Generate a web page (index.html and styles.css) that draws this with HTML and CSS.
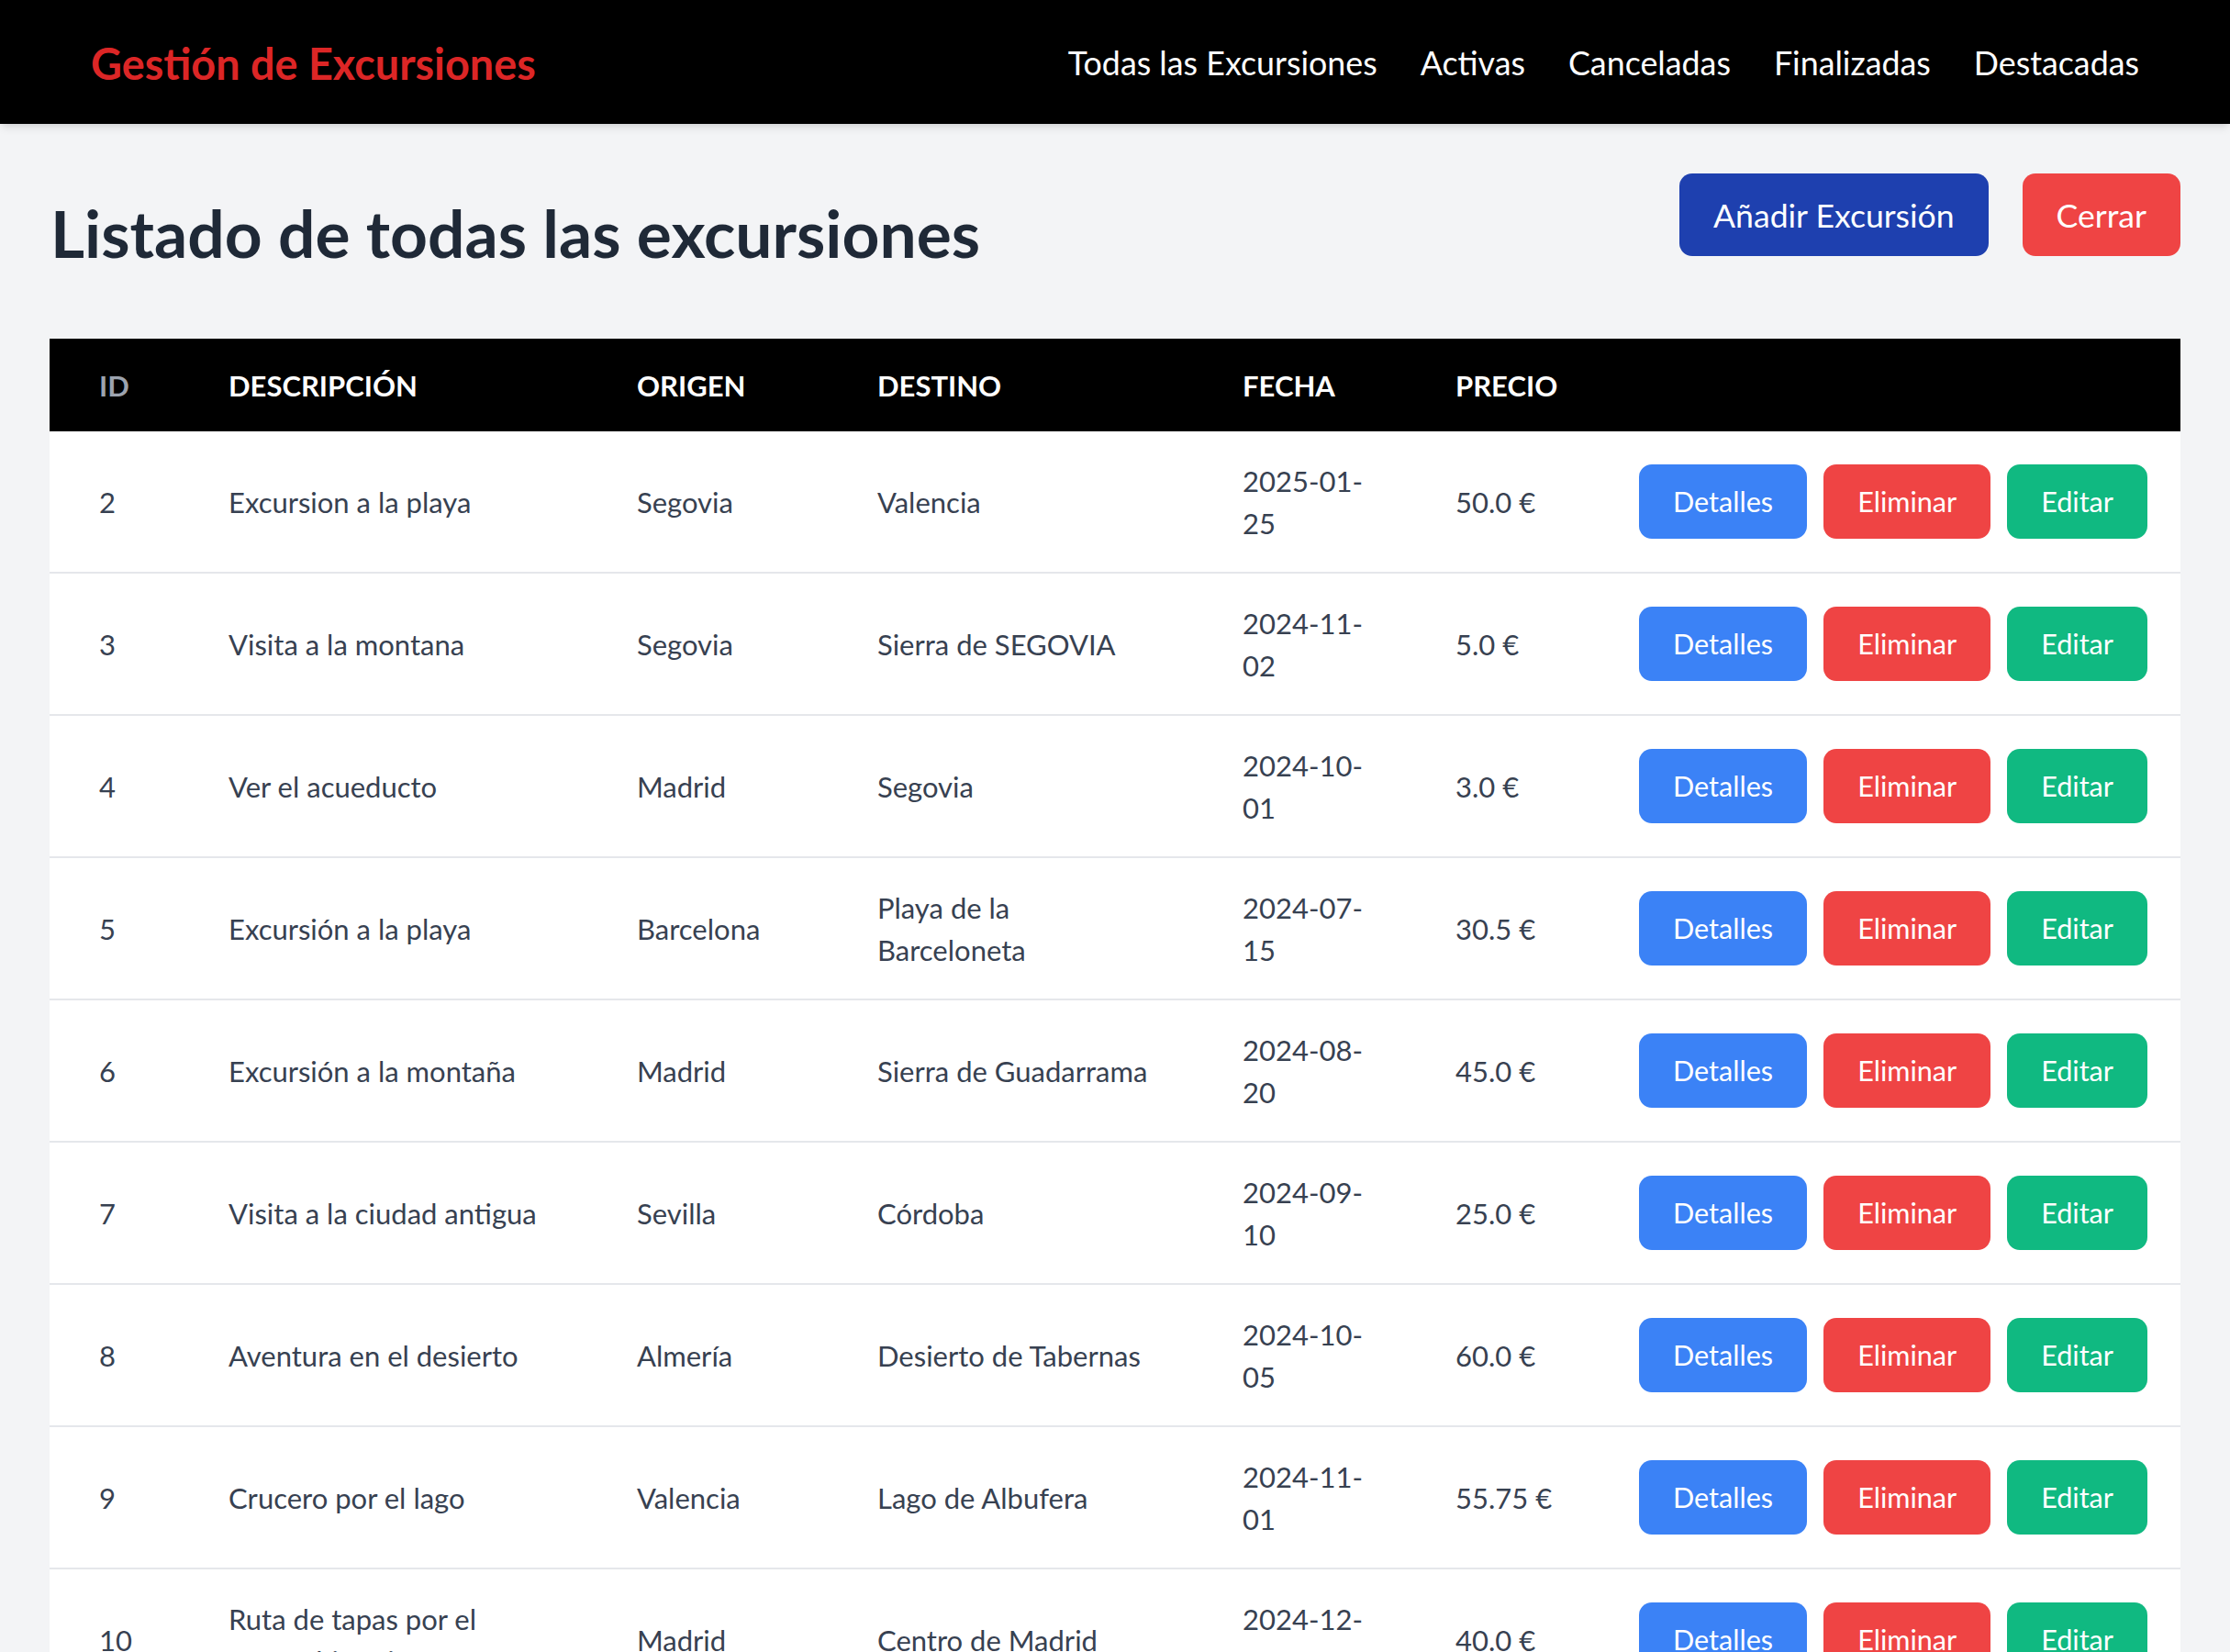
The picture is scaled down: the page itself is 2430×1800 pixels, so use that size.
FILE: index.html
```html
<!DOCTYPE html>
<html lang="es">
<head>
<meta charset="utf-8">
<title>Gestión de Excursiones</title>
<link rel="stylesheet" href="styles.css">
</head>
<body>
<nav class="navbar">
  <a class="brand" href="#">Gestión de Excursiones</a>
  <div class="nav-links">
    <a class="nav-link" href="#">Todas las Excursiones</a>
    <a class="nav-link" href="#">Activas</a>
    <a class="nav-link" href="#">Canceladas</a>
    <a class="nav-link" href="#">Finalizadas</a>
    <a class="nav-link" href="#">Destacadas</a>
  </div>
</nav>
<main class="content">
  <div class="page-head">
    <h1 class="page-title">Listado de todas las excursiones</h1>
    <div class="head-actions">
      <a class="btn btn-lg btn-navy" href="#">Añadir Excursión</a>
      <a class="btn btn-lg btn-red" href="#">Cerrar</a>
    </div>
  </div>
  <table class="table">
    <colgroup>
      <col class="col-id"><col class="col-desc"><col class="col-origen"><col class="col-destino"><col class="col-fecha"><col class="col-precio"><col class="col-actions">
    </colgroup>
    <thead>
      <tr>
        <th class="th-id">ID</th>
        <th>Descripción</th>
        <th>Origen</th>
        <th>Destino</th>
        <th>Fecha</th>
        <th>Precio</th>
        <th></th>
      </tr>
    </thead>
    <tbody>
      <tr>
        <td>2</td><td>Excursion a la playa</td><td>Segovia</td><td class="destino">Valencia</td><td class="fecha">2025-01-25</td><td>50.0 €</td>
        <td><div class="actions"><a class="btn btn-sm btn-blue" href="#">Detalles</a><a class="btn btn-sm btn-red" href="#">Eliminar</a><a class="btn btn-sm btn-green" href="#">Editar</a></div></td>
      </tr>
      <tr>
        <td>3</td><td>Visita a la montana</td><td>Segovia</td><td class="destino">Sierra de SEGOVIA</td><td class="fecha">2024-11-02</td><td>5.0 €</td>
        <td><div class="actions"><a class="btn btn-sm btn-blue" href="#">Detalles</a><a class="btn btn-sm btn-red" href="#">Eliminar</a><a class="btn btn-sm btn-green" href="#">Editar</a></div></td>
      </tr>
      <tr>
        <td>4</td><td>Ver el acueducto</td><td>Madrid</td><td class="destino">Segovia</td><td class="fecha">2024-10-01</td><td>3.0 €</td>
        <td><div class="actions"><a class="btn btn-sm btn-blue" href="#">Detalles</a><a class="btn btn-sm btn-red" href="#">Eliminar</a><a class="btn btn-sm btn-green" href="#">Editar</a></div></td>
      </tr>
      <tr>
        <td>5</td><td>Excursión a la playa</td><td>Barcelona</td><td class="destino">Playa de la Barceloneta</td><td class="fecha">2024-07-15</td><td>30.5 €</td>
        <td><div class="actions"><a class="btn btn-sm btn-blue" href="#">Detalles</a><a class="btn btn-sm btn-red" href="#">Eliminar</a><a class="btn btn-sm btn-green" href="#">Editar</a></div></td>
      </tr>
      <tr>
        <td>6</td><td>Excursión a la montaña</td><td>Madrid</td><td class="destino">Sierra de Guadarrama</td><td class="fecha">2024-08-20</td><td>45.0 €</td>
        <td><div class="actions"><a class="btn btn-sm btn-blue" href="#">Detalles</a><a class="btn btn-sm btn-red" href="#">Eliminar</a><a class="btn btn-sm btn-green" href="#">Editar</a></div></td>
      </tr>
      <tr>
        <td>7</td><td>Visita a la ciudad antigua</td><td>Sevilla</td><td class="destino">Córdoba</td><td class="fecha">2024-09-10</td><td>25.0 €</td>
        <td><div class="actions"><a class="btn btn-sm btn-blue" href="#">Detalles</a><a class="btn btn-sm btn-red" href="#">Eliminar</a><a class="btn btn-sm btn-green" href="#">Editar</a></div></td>
      </tr>
      <tr>
        <td>8</td><td>Aventura en el desierto</td><td>Almería</td><td class="destino">Desierto de Tabernas</td><td class="fecha">2024-10-05</td><td>60.0 €</td>
        <td><div class="actions"><a class="btn btn-sm btn-blue" href="#">Detalles</a><a class="btn btn-sm btn-red" href="#">Eliminar</a><a class="btn btn-sm btn-green" href="#">Editar</a></div></td>
      </tr>
      <tr>
        <td>9</td><td>Crucero por el lago</td><td>Valencia</td><td class="destino">Lago de Albufera</td><td class="fecha">2024-11-01</td><td>55.75 €</td>
        <td><div class="actions"><a class="btn btn-sm btn-blue" href="#">Detalles</a><a class="btn btn-sm btn-red" href="#">Eliminar</a><a class="btn btn-sm btn-green" href="#">Editar</a></div></td>
      </tr>
      <tr>
        <td>10</td><td>Ruta de tapas por el centro&nbsp;histórico</td><td>Madrid</td><td class="destino">Centro de Madrid</td><td class="fecha">2024-12-12</td><td>40.0 €</td>
        <td><div class="actions"><a class="btn btn-sm btn-blue" href="#">Detalles</a><a class="btn btn-sm btn-red" href="#">Eliminar</a><a class="btn btn-sm btn-green" href="#">Editar</a></div></td>
      </tr>
    </tbody>
  </table>
</main>
</body>
</html>
```

FILE: styles.css
```css
* {
  box-sizing: border-box;
}

body {
  margin: 0;
  font-family: "Lato", "Open Sans", sans-serif;
  background: #f3f4f6;
  color: #374151;
}

.navbar {
  position: relative;
  height: 135px;
  background: #000;
  display: flex;
  align-items: center;
  justify-content: space-between;
  padding: 2px 99px 0;
  box-shadow: 0 6px 9px -2px rgba(0, 0, 0, 0.1), 0 3px 6px -3px rgba(0, 0, 0, 0.08);
}

.brand {
  color: #dc2626;
  font-weight: 700;
  font-size: 46.8px;
  text-decoration: none;
}

.nav-links {
  display: flex;
  gap: 47px;
}

.nav-link {
  color: #fff;
  font-size: 35.8px;
  text-decoration: none;
}

.content {
  padding: 54px;
}

.page-head {
  display: flex;
  justify-content: space-between;
  align-items: flex-start;
  margin-bottom: 80px;
}

.page-title {
  margin: 30px 0 0 1px;
  font-size: 71.3px;
  line-height: 70px;
  font-weight: 700;
  color: #1f2937;
}

.head-actions {
  display: flex;
  gap: 37px;
}

.btn {
  display: inline-flex;
  align-items: center;
  justify-content: center;
  color: #fff;
  text-decoration: none;
  border-radius: 14px;
  padding: 0 37px;
  white-space: nowrap;
}

.btn-lg {
  height: 90px;
  font-size: 35.6px;
}

.btn-sm {
  height: 81px;
  font-size: 30.6px;
}

.btn-navy { background: #1e40af; }
.btn-red { background: #ef4444; }
.btn-blue { background: #3b82f6; }
.btn-green { background: #10b981; }

.table {
  width: 100%;
  table-layout: fixed;
  border-collapse: separate;
  border-spacing: 0;
  background: #fff;
}

.col-id { width: 141px; }
.col-desc { width: 445px; }
.col-origen { width: 262px; }
.col-destino { width: 398px; }
.col-fecha { width: 232px; }
.col-precio { width: 200px; }
.col-actions { width: 644px; }

thead tr {
  height: 101px;
  background: #000;
}

th {
  padding: 0 0 0 54px;
  text-align: left;
  color: #fff;
  font-weight: 700;
  font-size: 31px;
  text-transform: uppercase;
}

th.th-id {
  color: #9ca3af;
}

tbody tr {
  height: 155px;
}

td {
  padding: 0 20px 0 54px;
  border-bottom: 2px solid #e5e7eb;
  font-size: 31px;
  line-height: 46px;
  vertical-align: middle;
}

td.destino {
  padding-right: 37px;
}

td.fecha {
  padding-right: 38px;
}

.actions {
  display: flex;
  gap: 18px;
}
```
